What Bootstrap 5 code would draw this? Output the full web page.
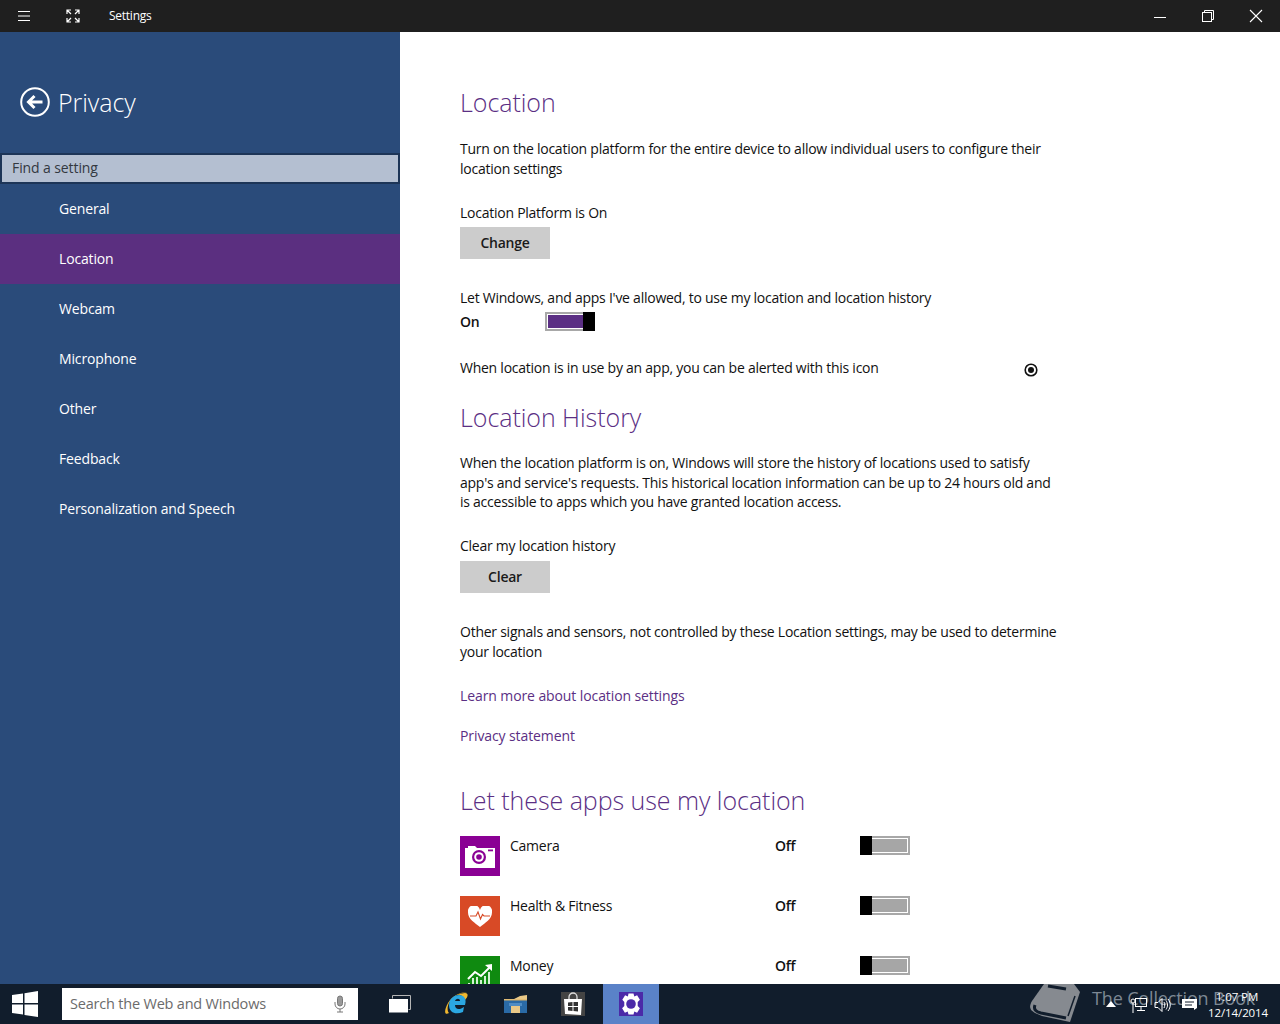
<!DOCTYPE html>
<html lang="en">
<head>
    <meta charset="UTF-8">
    <meta name="viewport" content="width=device-width, initial-scale=1.0">
    <title>Settings</title>
    <link href="https://cdn.jsdelivr.net/npm/bootstrap@5.3.2/dist/css/bootstrap.min.css" rel="stylesheet">
    <style>
        html, body { height: 100%; overflow: hidden; }
        body { font-family: "Open Sans", "Liberation Sans", sans-serif; font-size: 14px; letter-spacing: -0.25px; color: #111; background: #fff; }
        .win-shell { width: 1280px; height: 1024px; position: relative; overflow: hidden; }
        .title-bar { height: 32px; background: #1f1f1f; color: #fff; font-size: 12px; }
        .title-btn { width: 48px; height: 32px; }
        .main-area { height: 952px; }
        .side-pane { width: 400px; background: #2a4b7a; color: #fff; }
        .side-head { height: 121px; padding: 55px 0 0 20px; gap: 8px; }
        .side-head span { font-size: 25px; font-weight: 300; line-height: 30px; letter-spacing: -0.05px; }
        .find-box { height: 31px; background: #b4bfd1; border: 2px solid #1d3557; color: #33383f; padding-left: 10px; line-height: 25px; letter-spacing: -0.1px; }
        .side-item { height: 50px; line-height: 50px; padding-left: 59px; color: #fff; letter-spacing: -0.15px; }
        .side-item.is-on { background: #5b2f80; }
        .content-pane { padding: 54px 0 0 60px; }
        .sec-title { font-size: 25px; font-weight: 300; color: #5b2f84; line-height: 32px; margin: 0; letter-spacing: -0.05px; }
        .body-line { line-height: 19.5px; margin: 0; }
        .gray-btn { width: 90px; height: 32px; background: #ccc; font-weight: 600; line-height: 32px; text-align: center; color: #1a1a1a; }
        .purple-link { color: #5b2f84; text-decoration: none; display: block; line-height: 20px; letter-spacing: -0.1px; }
        .flip-switch { width: 50px; height: 19px; border: 2px solid #a8a8a8; position: relative; }
        .flip-switch i { display: block; position: absolute; top: 1px; bottom: 1px; left: 1px; right: 1px; }
        .flip-switch b { display: block; position: absolute; top: -2px; bottom: -2px; width: 12px; background: #000; }
        .flip-switch.sw-on i { background: #5b2f84; }
        .flip-switch.sw-on b { right: -2px; }
        .flip-switch.sw-off i { background: #a6a6a6; }
        .flip-switch.sw-off b { left: -2px; }
        .on-label { font-weight: 600; }
        .app-row { height: 60px; }
        .app-tile { width: 40px; height: 40px; }
        .app-name { width: 265px; margin-left: 10px; line-height: 20px; }
        .app-state { width: 85px; font-weight: 600; line-height: 20px; }
        .task-bar { height: 40px; background: #111d2c; }
        .start-btn { width: 50px; }
        .search-web { width: 296px; height: 32px; margin: 4px 0 0 12px; background: #fff; color: #6b6b6b; padding: 0 12px 0 8px; font-size: 14.5px; letter-spacing: -0.2px; }
        .task-icon { width: 58px; height: 40px; }
        .task-icon.is-active { width: 56px; background: #5a82c8; margin-left: 1px; }
        .tray-area { position: absolute; right: 0; top: 984px; bottom: 0; left: 1030px; color: #fff; }
        .brand-mark { position: absolute; left: 62px; top: 1px; font-size: 18px; color: #7d8894; white-space: nowrap; letter-spacing: -0.15px; }
        .book-mark { position: absolute; left: 0; top: 0; }
        .tray-glyph { position: absolute; }
        .clock-box { position: absolute; left: 178px; width: 58px; top: 5px; font-size: 11.5px; line-height: 16px; text-align: center; letter-spacing: -0.1px; white-space: nowrap; }
    </style>
</head>
<body>
<div class="win-shell">
    <div class="title-bar d-flex align-items-center">
        <svg class="ms-3" width="16" height="16" viewBox="0 0 16 16"><path d="M2 3.500h12M2 8h12M2 12.500h12" stroke="#fff" stroke-width="1"/></svg>
        <svg style="margin-left:33px" width="16" height="16" viewBox="0 0 16 16" fill="none" stroke="#fff" stroke-width="1.200"><path d="M2 6V2h4M2 2l4 4M10 2h4v4M14 2l-4 4M2 10v4h4M2 14l4-4M10 14h4v-4M14 14l-4-4"/></svg>
        <span style="margin-left:28px">Settings</span>
        <div class="ms-auto d-flex">
            <div class="title-btn d-flex align-items-center justify-content-center"><svg width="14" height="14" viewBox="0 0 14 14"><path d="M1 8.500h12" stroke="#fff"/></svg></div>
            <div class="title-btn d-flex align-items-center justify-content-center"><svg width="14" height="14" viewBox="0 0 14 14" fill="none" stroke="#fff"><rect x="1.500" y="3.500" width="9" height="9"/><path d="M3.500 3.500v-2h9v9h-2"/></svg></div>
            <div class="title-btn d-flex align-items-center justify-content-center"><svg width="14" height="14" viewBox="0 0 14 14"><path d="M1 1l12 12M13 1L1 13" stroke="#fff" stroke-width="1.100"/></svg></div>
        </div>
    </div>

    <div class="main-area d-flex">
        <div class="side-pane flex-shrink-0">
            <div class="side-head d-flex align-items-start">
                <svg width="30" height="30" viewBox="0 0 30 30" fill="none" stroke="#fff"><circle cx="15" cy="15" r="13.800" stroke-width="2"/><path d="M22.500 15H9M14.500 9l-6 6 6 6" stroke-width="3"/></svg>
                <span>Privacy</span>
            </div>
            <div class="find-box">Find a setting</div>
            <div class="side-item">General</div>
            <div class="side-item is-on">Location</div>
            <div class="side-item">Webcam</div>
            <div class="side-item">Microphone</div>
            <div class="side-item">Other</div>
            <div class="side-item">Feedback</div>
            <div class="side-item">Personalization and Speech</div>
        </div>

        <div class="content-pane flex-grow-1 overflow-hidden">
            <h2 class="sec-title">Location</h2>
            <p class="body-line" style="margin-top:21px">Turn on the location platform for the entire device to allow individual users to configure their<br>location settings</p>
            <p class="body-line" style="margin-top:25px">Location Platform is On</p>
            <div class="gray-btn" style="margin-top:4px">Change</div>
            <p class="body-line" style="margin-top:29px">Let Windows, and apps I've allowed, to use my location and location history</p>
            <div class="d-flex align-items-center" style="margin-top:4px;height:20px">
                <span class="on-label" style="width:85px">On</span>
                <div class="flip-switch sw-on"><i></i><b></b></div>
            </div>
            <div class="d-flex align-items-center" style="margin-top:26px;width:581px;height:20px">
                <span>When location is in use by an app, you can be alerted with this icon</span>
                <svg class="ms-auto" style="margin-top:6px;margin-right:3px" width="14" height="14" viewBox="0 0 14 14"><circle cx="7" cy="7" r="5.800" fill="none" stroke="#111" stroke-width="1.600"/><circle cx="7" cy="7" r="3" fill="#111"/></svg>
            </div>
            <h2 class="sec-title" style="margin-top:24px">Location History</h2>
            <p class="body-line" style="margin-top:20px">When the location platform is on, Windows will store the history of locations used to satisfy<br>app's and service's requests. This historical location information can be up to 24 hours old and<br>is accessible to apps which you have granted location access.</p>
            <p class="body-line" style="margin-top:24px">Clear my location history</p>
            <div class="gray-btn" style="margin-top:6px">Clear</div>
            <p class="body-line" style="margin-top:29px">Other signals and sensors, not controlled by these Location settings, may be used to determine<br>your location</p>
            <a class="purple-link" style="margin-top:25px" href="#">Learn more about location settings</a>
            <a class="purple-link" style="margin-top:20px" href="#">Privacy statement</a>
            <h2 class="sec-title" style="margin-top:38px">Let these apps use my location</h2>

            <div style="margin-top:20px">
                <div class="app-row d-flex align-items-start">
                    <div class="app-tile d-flex align-items-center justify-content-center" style="background:#8a0094">
                        <svg style="margin-top:2px" width="30" height="22" viewBox="0 0 30 22"><path d="M0 2h3V0h7l2 2h18v20H0z" fill="#fff"/><circle cx="14" cy="11" r="7" fill="#8a0094"/><circle cx="14" cy="11" r="4.800" fill="#fff"/><circle cx="14" cy="11" r="2.800" fill="#8a0094"/><rect x="23" y="3.500" width="5" height="1.800" fill="#8a0094"/></svg>
                    </div>
                    <div class="app-name">Camera</div>
                    <div class="app-state">Off</div>
                    <div class="flip-switch sw-off"><i></i><b></b></div>
                </div>
                <div class="app-row d-flex align-items-start">
                    <div class="app-tile d-flex align-items-center justify-content-center" style="background:#d84a26">
                        <svg width="24" height="21" viewBox="0 0 24 21"><path d="M12 21C7 17 0 13 0 6.500a6 6 0 0 1 12-2.500 6 6 0 0 1 12 2.500C24 13 17 17 12 21z" fill="#fff"/><path d="M2 10h6l2-4 2.500 7 2-4.500 1.500 1.500h6" fill="none" stroke="#d84a26" stroke-width="1.100"/></svg>
                    </div>
                    <div class="app-name">Health &amp; Fitness</div>
                    <div class="app-state">Off</div>
                    <div class="flip-switch sw-off"><i></i><b></b></div>
                </div>
                <div class="app-row d-flex align-items-start">
                    <div class="app-tile d-flex justify-content-center" style="background:#0f8a10">
                        <svg style="margin-top:7px" width="28" height="33" viewBox="0 0 28 33"><path d="M2 16l7-7 6 4 9-9" fill="none" stroke="#fff" stroke-width="2"/><path d="M19 2l7-1v7z" fill="#fff"/><path d="M3 20v13M7 15v18M11 14v19M15 17v16M19 13v20M23 9v24" stroke="#d5f0d5" stroke-width="2"/></svg>
                    </div>
                    <div class="app-name">Money</div>
                    <div class="app-state">Off</div>
                    <div class="flip-switch sw-off"><i></i><b></b></div>
                </div>
            </div>
        </div>
    </div>

    <div class="task-bar d-flex">
        <div class="start-btn d-flex align-items-center justify-content-center">
            <svg width="26" height="26" viewBox="0 0 26 26" fill="#fff"><path d="M0 4l11-1.600V12H0zM12.500 2.200L26 0v12H12.500zM0 13.500h11v10L0 22zM12.500 13.500H26V26l-13.500-2z"/></svg>
        </div>
        <div class="search-web d-flex align-items-center justify-content-between">
            <span>Search the Web and Windows</span>
            <svg width="12" height="18" viewBox="0 0 12 18" fill="none" stroke="#777"><rect x="3.500" y="1" width="5" height="10" rx="2.500" fill="#999"/><path d="M1 7v2a5 5 0 0 0 10 0V7M6 14v3M3 17h6"/></svg>
        </div>
        <div class="d-flex" style="margin-left:12px">
            <div class="task-icon d-flex align-items-center justify-content-center">
                <svg width="23" height="18" viewBox="0 0 23 18"><path d="M4.500 3.500v-3h18v14h-2" fill="none" stroke="#b5b5b5"/><rect x="1" y="4" width="19" height="13.500" fill="#fff"/></svg>
            </div>
            <div class="task-icon d-flex align-items-center justify-content-center">
                <svg width="26" height="24" viewBox="0 0 26 24"><path d="M5 21C0 24 0 18 4 11 8 5 16-1 23 1c-4-1-9 1-13 4-6 4-8 13-5 16z" fill="#f0b72f"/><path d="M12 3c5-1 8 2 9 5 3-3 4-7 0-7-2 0-6 1-9 2z" fill="#f0b72f"/><path d="M21 13H11c0 5 5 5 9 2l-1 5c-7 3-14 1-14-7C5 6 11 3 15 3c5 0 8 4 6 10zM11 9h5c0-3-4-3-5 0z" fill="#2ba7e2"/></svg>
            </div>
            <div class="task-icon d-flex align-items-center justify-content-center">
                <svg width="23" height="18" viewBox="0 0 23 18"><path d="M0 4h10l6-3 7-1v18H0z" fill="#e9c887"/><rect y="5" width="23" height="13" fill="#2a6aa6"/><path d="M0 5h23" stroke="#d7ae62"/><rect x="7" y="11" width="9" height="7" fill="#e9c887"/><rect x="5" y="8" width="13" height="3" fill="#4f8cc4"/></svg>
            </div>
            <div class="task-icon d-flex align-items-center justify-content-center">
                <svg width="24" height="24" viewBox="0 0 24 24"><rect width="24" height="24" fill="#444"/><path d="M3 7h18l-1 16-16-1z" fill="#fff"/><path d="M8 7V5a4 4 0 0 1 8 0v2" fill="none" stroke="#ddd" stroke-width="1.300"/><path d="M7 10.500l4.500-.5v4H7zM12.500 10h4.500v4h-4.500zM7 15h4.500v4L7 18.500zM12.500 15H17v4.500L12.500 19z" fill="#333"/></svg>
            </div>
            <div class="task-icon is-active d-flex align-items-center justify-content-center">
                <svg width="24" height="24" viewBox="0 0 24 24"><rect width="24" height="24" fill="#4b2aa8"/><path d="M9.500 1.500h5l.8 3 2.800-1.200 2.800 4.400-2.200 2.300v4l2.200 2.300-2.800 4.400-2.800-1.200-.8 3h-5l-.8-3-2.800 1.200-2.800-4.400 2.200-2.300v-4L3.300 7.700l2.800-4.400 2.800 1.200z" fill="#fff"/><circle cx="12" cy="12" r="4.800" fill="#4b2aa8"/></svg>
            </div>
        </div>
    </div>

    <div class="tray-area">
        <svg class="book-mark" width="52" height="40" viewBox="0 0 52 40"><path d="M14 0h30l6 8-10 30-28-6C0 28-2 24 2 17z" fill="#868a90"/><path d="M5 21c-2 5 2 7 6 8l25 5" fill="none" stroke="#111d2c" stroke-width="3"/><path d="M45 12l-7 20" stroke="#111d2c" stroke-width="1.500"/><path d="M18 2l18 3" stroke="#111d2c" stroke-width="3"/></svg>
        <span class="brand-mark">The Collection Book</span>
        <svg class="tray-glyph" style="left:76px;top:17px" width="10" height="6" viewBox="0 0 10 6"><path d="M5 0l5 6H0z" fill="#fff"/></svg>
        <svg class="tray-glyph" style="left:100px;top:13px" width="17" height="16" viewBox="0 0 17 16" fill="none" stroke="#fff"><rect x="5.500" y="1.500" width="11" height="8"/><path d="M11 10v3M7 13.500h8"/><circle cx="3" cy="4" r="2" fill="#111d2c"/><path d="M3 6v10"/></svg>
        <svg class="tray-glyph" style="left:124px;top:13px" width="17" height="16" viewBox="0 0 17 16" fill="none" stroke="#fff"><path d="M1 5.500h3l4-4v13l-4-4H1z"/><path d="M10 5c1 2 1 4 0 6M12 3.500c2 3 2 6 0 9M14 2c3 4 3 8 0 12"/></svg>
        <svg class="tray-glyph" style="left:152px;top:15px" width="15" height="11" viewBox="0 0 15 11"><path d="M0 0h15v9l-3 2v-2H0z" fill="#fff"/><path d="M3 3h9M3 6h7" stroke="#111d2c"/></svg>
        <div class="clock-box">1:07 PM<br>12/14/2014</div>
    </div>
</div>
<script src="https://cdn.jsdelivr.net/npm/bootstrap@5.3.2/dist/js/bootstrap.bundle.min.js"></script>
</body>
</html>
